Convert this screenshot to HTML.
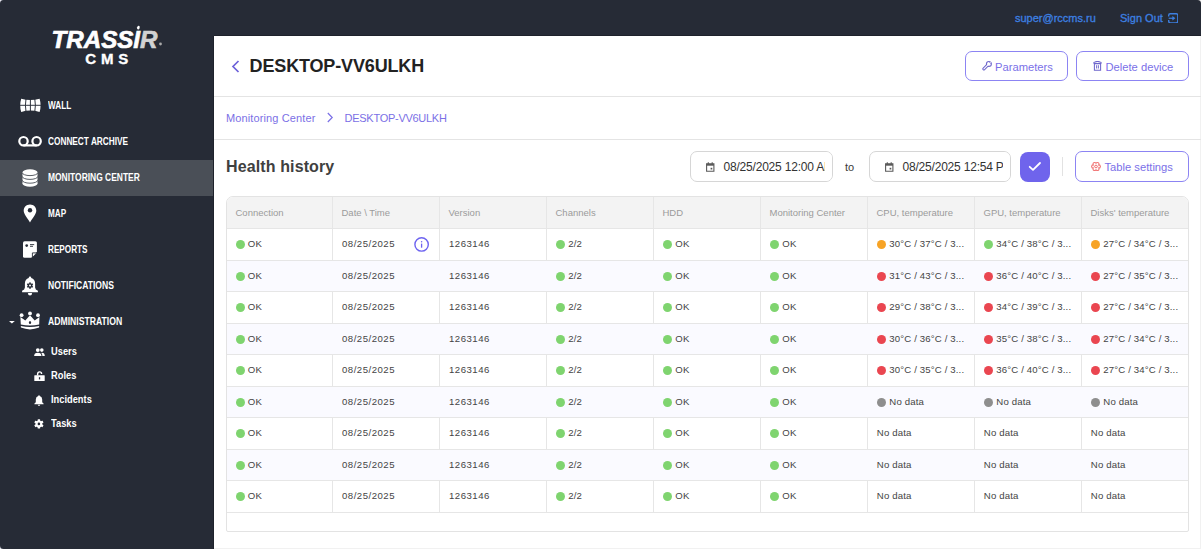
<!DOCTYPE html>
<html><head><meta charset="utf-8">
<style>
*{margin:0;padding:0;box-sizing:border-box}
html,body{width:1201px;height:549px;overflow:hidden;background:#262b36;font-family:"Liberation Sans",sans-serif;position:relative}
.abs{position:absolute}
/* sidebar */
.nav{position:absolute;left:48px;color:#fff;font-weight:bold;font-size:10px;line-height:12px;white-space:nowrap;transform:scaleX(0.84);transform-origin:0 0}
.sub{position:absolute;left:51px;color:#fff;font-weight:bold;font-size:10px;line-height:12px;white-space:nowrap;transform:scaleX(0.93);transform-origin:0 0}
.ico{position:absolute}
.hl{position:absolute;left:0;top:160px;width:214px;height:36px;background:#4a4f57}
/* top */
.toplink{position:absolute;top:11px;color:#3d80e2;font-size:11px;line-height:14px;white-space:nowrap;-webkit-text-stroke:0.3px #3d80e2}
/* panel */
.panel{position:absolute;left:214px;top:36px;width:987px;height:513px;background:#fff}
.sep{position:absolute;left:214px;width:987px;height:1px;background:#e4e4e4}
.title{position:absolute;left:249.6px;top:55px;font-size:18px;line-height:22px;font-weight:bold;color:#222;letter-spacing:-0.15px;white-space:nowrap}
.btn{position:absolute;border:1px solid #8c84f3;border-radius:7px;background:#fff;color:#7a70e8;font-size:11.2px;line-height:14px;white-space:nowrap}
.btn span{position:absolute;top:7.5px}
.bc{position:absolute;top:111px;font-size:11px;line-height:14px;color:#7b70e6;white-space:nowrap}
.hh{position:absolute;left:226px;top:156.6px;font-size:16px;line-height:20px;font-weight:bold;color:#404040;white-space:nowrap;letter-spacing:0.12px}
.inp{position:absolute;top:151px;height:31px;border:1px solid #d6d6d6;border-radius:7px;background:#fff;overflow:hidden}
.inp span{position:absolute;top:8px;font-size:12px;line-height:14px;color:#333;white-space:nowrap;letter-spacing:-0.2px}
/* table */
.tbl{position:absolute;left:226px;top:196px;width:963px;height:336px;border:1px solid #e3e3e3;border-radius:7px 7px 2px 2px;overflow:hidden;background:#fff}
.thead{position:absolute;left:214px;top:0;width:987px;height:228px}
.row{position:absolute;left:227px;width:961px;border-top:1px solid #e6e6e6}
.row.st{background:#fafaff}
.vl{position:absolute;top:197px;height:315px;width:1px;background:#e6e6e6}
.h{position:absolute;top:11px;font-size:9.5px;line-height:12px;color:#9b9b9b;white-space:nowrap}
.t{position:absolute;font-size:9.6px;line-height:12px;color:#444;white-space:nowrap;letter-spacing:0.15px}
.num{letter-spacing:0.5px}
.dot{position:absolute;width:9px;height:9px;border-radius:50%}
.dot.g{background:#7fd46f}
.dot.o{background:#f7a325}
.dot.r{background:#ea4650}
.dot.n{background:#8e8e8e}
</style></head><body>
<!-- sidebar -->
<svg class="ico" style="left:48px;top:22px" width="120" height="45" viewBox="0 0 120 45">
  <text x="3.5" y="26" fill="#fff" stroke="#fff" stroke-width="0.7" font-family="Liberation Sans" font-weight="bold" font-style="italic" font-size="24.5" textLength="106" lengthAdjust="spacingAndGlyphs">TRASSI<tspan fill="#d2d2d2" stroke="#d2d2d2">R</tspan></text>
  <ellipse cx="90.4" cy="5.6" rx="1.3" ry="1.9" fill="#fff" transform="rotate(15 90.4 5.6)"/>
  <circle cx="112.5" cy="22" r="1.4" fill="#aaa"/>
  <text x="37.3" y="41.6" fill="#fff" stroke="#fff" stroke-width="0.35" font-family="Liberation Sans" font-weight="bold" font-size="15" textLength="43" lengthAdjust="spacing">CMS</text>
</svg>

<div class="hl"></div>

<!-- wall -->
<svg class="ico" style="left:19px;top:97px" width="23" height="17" viewBox="0 0 23 17">
  <path d="M2.2 1.7 Q11.4 4.4 20.6 1.7 Q22.6 8.3 20.6 14.9 Q11.4 12.2 2.2 14.9 Q0.2 8.3 2.2 1.7Z" fill="#fff"/>
  <path d="M7.1 1 Q5.7 8.3 7.1 15.6 M11.4 1 V15.6 M15.7 1 Q17.1 8.3 15.7 15.6 M0 8.3 H23" stroke="#262b36" stroke-width="0.95" fill="none"/>
</svg>
<div class="nav" style="top:100px;transform:scaleX(0.817)">WALL</div>

<!-- connect archive -->
<svg class="ico" style="left:18px;top:134.5px" width="25" height="13" viewBox="0 0 25 13">
  <circle cx="5.5" cy="6.2" r="4.2" stroke="#fff" stroke-width="2.2" fill="none"/>
  <circle cx="18.6" cy="6.2" r="4.2" stroke="#fff" stroke-width="2.2" fill="none"/>
  <path d="M5.5 10.4 H18.6" stroke="#fff" stroke-width="2.2"/>
</svg>
<div class="nav" style="top:136px;transform:scaleX(0.827)">CONNECT ARCHIVE</div>

<!-- monitoring -->
<svg class="ico" style="left:21px;top:168px" width="18" height="20" viewBox="0 0 18 20">
  <ellipse cx="9" cy="4.2" rx="7.5" ry="2.9" fill="#fff"/>
  <ellipse cx="9" cy="15.8" rx="7.5" ry="2.9" fill="#fff"/>
  <rect x="1.5" y="4.2" width="15" height="11.6" fill="#fff"/>
  <path d="M1.2 4.6 A7.8 3 0 0 0 16.8 4.6 M1.2 8.4 A7.8 3 0 0 0 16.8 8.4 M1.2 12.2 A7.8 3 0 0 0 16.8 12.2" stroke="#4a4f57" stroke-width="0.9" fill="none"/>
</svg>
<div class="nav" style="top:172px;transform:scaleX(0.845)">MONITORING CENTER</div>

<!-- map -->
<svg class="ico" style="left:23px;top:204px" width="14" height="19" viewBox="0 0 14 19">
  <path d="M7 0.5 C10.8 0.5 13.3 3.3 13.3 6.6 C13.3 10.5 9.5 14 7 18.5 C4.5 14 0.7 10.5 0.7 6.6 C0.7 3.3 3.2 0.5 7 0.5Z" fill="#fff"/>
  <circle cx="7" cy="6.3" r="2.2" fill="#262b36"/>
</svg>
<div class="nav" style="top:208px;transform:scaleX(0.817)">MAP</div>

<!-- reports -->
<svg class="ico" style="left:22px;top:240px" width="16" height="19" viewBox="0 0 16 19">
  <path d="M2.6 1.2 H13.3 Q14.9 1.2 14.9 2.8 V11.8 L9.3 17.8 H2.6 Q1 17.8 1 16.2 V2.8 Q1 1.2 2.6 1.2Z" fill="#fff"/>
  <path d="M10.4 17.6 L10.4 12.9 L14.8 12.9Z" fill="#fff" stroke="#262b36" stroke-width="0.9" stroke-linejoin="round"/>
  <circle cx="4.7" cy="5.6" r="1.35" fill="#262b36"/>
  <path d="M8 4.6 H12.2 M8 6.3 H11" stroke="#262b36" stroke-width="0.9"/>
</svg>
<div class="nav" style="top:244px;transform:scaleX(0.817)">REPORTS</div>

<!-- notifications -->
<svg class="ico" style="left:21px;top:275.5px" width="18" height="21" viewBox="0 0 18 21">
  <path d="M9 0.6 Q10.2 0.6 10.3 1.9 Q14 2.9 14.1 7.6 V11.4 Q14.2 13.6 16.9 14.8 V16.3 H1.1 V14.8 Q3.8 13.6 3.9 11.4 V7.6 Q4 2.9 7.7 1.9 Q7.8 0.6 9 0.6Z" fill="#fff"/>
  <path d="M6.9 17 H11.1 Q11.1 19.6 9 19.6 Q6.9 19.6 6.9 17Z" fill="#fff"/>
  <g transform="translate(9 9.6)" fill="#262b36">
    <circle r="2.3"/>
    <rect x="-0.75" y="-3.2" width="1.5" height="6.4"/>
    <rect x="-0.75" y="-3.2" width="1.5" height="6.4" transform="rotate(60)"/>
    <rect x="-0.75" y="-3.2" width="1.5" height="6.4" transform="rotate(120)"/>
  </g>
  <circle cx="9" cy="9.6" r="1" fill="#fff"/>
</svg>
<div class="nav" style="top:280px;transform:scaleX(0.855)">NOTIFICATIONS</div>

<!-- administration -->
<svg class="ico" style="left:8px;top:311px" width="34" height="20" viewBox="0 0 34 20">
  <path d="M1 9.9 H6.8 L3.9 12.6Z" fill="#fff"/>
  <circle cx="13.6" cy="4.2" r="1.9" fill="#fff"/>
  <circle cx="22" cy="2.4" r="1.9" fill="#fff"/>
  <circle cx="30" cy="4.2" r="1.9" fill="#fff"/>
  <path d="M12.4 6 L17.3 9.6 L22 4.3 L26.7 9.6 L31.4 6 L31.2 13.6 Q22 15.6 12.8 13.6Z" fill="#fff"/>
  <path d="M12.8 14.9 Q22 16.9 31.2 14.9 L31.1 16.6 Q22 20.2 12.9 16.6Z" fill="#fff"/>
  <ellipse cx="22" cy="11.6" rx="1.1" ry="1.5" fill="#262b36"/>
</svg>
<div class="nav" style="top:316px;transform:scaleX(0.864)">ADMINISTRATION</div>

<!-- sub items -->
<svg class="ico" style="left:33.5px;top:347.6px" width="11" height="9" viewBox="0 0 11 9">
  <circle cx="3.8" cy="2.1" r="1.9" fill="#fff"/><circle cx="7.8" cy="2.1" r="1.8" fill="#fff"/>
  <path d="M0.1 8.1 Q0.1 4.7 3.8 4.7 Q7.5 4.7 7.5 8.1Z" fill="#fff"/>
  <path d="M7.9 4.7 Q10.8 4.7 10.8 8.1 H8.4 Q8.4 6 7.3 5Z" fill="#fff"/>
</svg>
<div class="sub" style="top:346px">Users</div>
<svg class="ico" style="left:34px;top:371px" width="11" height="11" viewBox="0 0 11 11">
  <path d="M3.6 4.6 V3.2 Q3.6 0.9 5.6 0.9 Q7.6 0.9 7.6 3" stroke="#fff" stroke-width="1.4" fill="none"/>
  <rect x="0.3" y="4.3" width="10.4" height="5.8" rx="0.5" fill="#fff"/>
  <rect x="4.9" y="6.2" width="1.3" height="2.2" fill="#262b36"/>
</svg>
<div class="sub" style="top:370px">Roles</div>
<svg class="ico" style="left:34px;top:395px" width="10" height="11" viewBox="0 0 10 11">
  <path d="M5 0.3 Q5.8 0.3 5.8 1 Q8.2 1.8 8.2 4.5 V6.8 Q8.2 7.8 9.6 8.6 V9.3 H0.4 V8.6 Q1.8 7.8 1.8 6.8 V4.5 Q1.8 1.8 4.2 1 Q4.2 0.3 5 0.3Z" fill="#fff"/>
  <path d="M3.8 9.8 H6.2 Q6.2 10.9 5 10.9 Q3.8 10.9 3.8 9.8Z" fill="#fff"/>
</svg>
<div class="sub" style="top:394px">Incidents</div>
<svg class="ico" style="left:34px;top:419px" width="10" height="10" viewBox="0 0 10 10">
  <g transform="translate(4.9 4.9)" fill="#fff">
    <circle r="3.4"/>
    <rect x="-1.2" y="-4.7" width="2.4" height="9.4" rx="0.4"/>
    <rect x="-1.2" y="-4.7" width="2.4" height="9.4" rx="0.4" transform="rotate(60)"/>
    <rect x="-1.2" y="-4.7" width="2.4" height="9.4" rx="0.4" transform="rotate(120)"/>
  </g>
  <circle cx="4.9" cy="4.9" r="1.3" fill="#262b36"/>
</svg>
<div class="sub" style="top:418px">Tasks</div>

<!-- top bar -->
<div class="toplink" style="left:1015px">super@rccms.ru</div>
<div class="toplink" style="left:1120px">Sign Out</div>
<svg class="ico" style="left:1167.5px;top:12.8px" width="10.5" height="10.5" viewBox="0 0 10.5 10.5">
  <path d="M0.7 3.4 V2.2 Q0.7 0.7 2.2 0.7 H8.3 Q9.8 0.7 9.8 2.2 V8.3 Q9.8 9.8 8.3 9.8 H2.2 Q0.7 9.8 0.7 8.3 V7.1" stroke="#3d80e2" stroke-width="1.35" fill="none"/>
  <path d="M0.7 5.25 H5" stroke="#3d80e2" stroke-width="1.2"/>
  <path d="M4.4 3.1 L7.4 5.25 L4.4 7.4Z" fill="#3d80e2"/>
</svg>

<!-- panel -->
<div class="panel"></div>
<div class="abs" style="left:214px;top:548px;width:987px;height:1px;background:#f1f1f1"></div>
<div class="abs" style="left:1200px;top:36px;width:1px;height:513px;background:#f1f1f1"></div>
<div class="abs" style="left:213px;top:36px;width:1px;height:513px;background:#1e222b"></div>
<div class="abs" style="left:214px;top:35px;width:987px;height:1px;background:#1e222b"></div>
<div class="sep" style="top:96px"></div>
<div class="sep" style="top:139px"></div>

<svg class="ico" style="left:230px;top:60px" width="12" height="13" viewBox="0 0 12 13">
  <path d="M8.5 1 L3 6.5 L8.5 12" stroke="#6c61d9" stroke-width="1.7" fill="none"/>
</svg>
<div class="title">DESKTOP-VV6ULKH</div>

<div class="btn" style="left:965px;top:51px;width:103px;height:30px">
  <svg class="ico" style="left:15.5px;top:8.2px" width="11" height="11" viewBox="0 0 11 11">
  <g stroke="#6e66cc" fill="none" stroke-width="3.1" stroke-linecap="round"><path d="M1.9 8.9 L5.6 5.2"/></g>
  <circle cx="6.9" cy="3.9" r="3" fill="#6e66cc"/>
  <g stroke="#fff" fill="none" stroke-width="1.1" stroke-linecap="round"><path d="M1.9 8.9 L5.6 5.2"/></g>
  <circle cx="6.9" cy="3.9" r="1.9" fill="#fff"/>
  <path d="M6.9 3.9 L8.6 0 L11 2.4Z" fill="#fff"/>
  <path d="M7.6 2.6 L8.2 1.2 M8.2 3.2 L9.8 2.8" stroke="#6e66cc" stroke-width="1" fill="none"/>
</svg>
  <span style="left:29px">Parameters</span>
</div>
<div class="btn" style="left:1076px;top:51px;width:113px;height:30px">
  <svg class="ico" style="left:16px;top:8.6px" width="9" height="10" viewBox="0 0 9 10">
  <path d="M0.6 2.4 Q0.6 1.2 2.2 1.1 Q3 0.4 4.5 0.4 Q6 0.4 6.8 1.1 Q8.4 1.2 8.4 2.4" stroke="#6e66cc" stroke-width="1.05" fill="none"/>
  <path d="M1.4 2.6 H7.6 V9.2 H1.4Z" stroke="#6e66cc" stroke-width="1.05" fill="none"/>
  <path d="M3.6 4.2 V7.5 M5.4 4.2 V7.5" stroke="#6e66cc" stroke-width="0.95"/>
</svg>
  <span style="left:28.5px">Delete device</span>
</div>

<div class="bc" style="left:226px;letter-spacing:0.12px">Monitoring Center</div>
<svg class="ico" style="left:326px;top:112px" width="8" height="11" viewBox="0 0 8 11">
  <path d="M1.8 1 L6.2 5.5 L1.8 10" stroke="#7b70e6" stroke-width="1.2" fill="none"/>
</svg>
<div class="bc" style="left:344.6px;letter-spacing:-0.28px">DESKTOP-VV6ULKH</div>

<div class="hh">Health history</div>

<div class="inp" style="left:690px;width:143px">
  <svg class="ico" style="left:15px;top:9.6px" width="9" height="10" viewBox="0 0 9 10">
    <path d="M0.6 1.9 H7.9 V9.3 H0.6Z" stroke="#5a5a5a" stroke-width="1.1" fill="#fff"/>
    <rect x="0.6" y="1.9" width="7.3" height="1.8" fill="#5a5a5a"/>
    <path d="M2.3 0.3 V2 M6.2 0.3 V2" stroke="#5a5a5a" stroke-width="1.1"/>
    <rect x="4.6" y="5.8" width="1.7" height="1.7" fill="#5a5a5a"/>
  </svg>
  <span style="left:32.5px">08/25/2025 12:00 AM</span>
  <div class="abs" style="left:134px;top:0;width:10px;height:30px;background:#fff"></div>
</div>
<div class="abs" style="left:845px;top:160px;font-size:11px;line-height:14px;color:#3a3a3a">to</div>
<div class="inp" style="left:869px;width:142px">
  <svg class="ico" style="left:15px;top:9.6px" width="9" height="10" viewBox="0 0 9 10">
    <path d="M0.6 1.9 H7.9 V9.3 H0.6Z" stroke="#5a5a5a" stroke-width="1.1" fill="#fff"/>
    <rect x="0.6" y="1.9" width="7.3" height="1.8" fill="#5a5a5a"/>
    <path d="M2.3 0.3 V2 M6.2 0.3 V2" stroke="#5a5a5a" stroke-width="1.1"/>
    <rect x="4.6" y="5.8" width="1.7" height="1.7" fill="#5a5a5a"/>
  </svg>
  <span style="left:32.5px">08/25/2025 12:54 PM</span>
  <div class="abs" style="left:133px;top:0;width:10px;height:30px;background:#fff"></div>
</div>
<div class="abs" style="left:1020px;top:151.5px;width:30px;height:30px;border-radius:8px;background:#6f64ec">
  <svg class="ico" style="left:8px;top:9.5px" width="14" height="11" viewBox="0 0 14 11">
    <path d="M1.7 5.8 L5 8.9 L12 2" stroke="#fff" stroke-width="1.8" fill="none" stroke-linecap="round" stroke-linejoin="round"/>
  </svg>
</div>
<div class="abs" style="left:1062px;top:157px;width:1px;height:19px;background:#e2e2e2"></div>
<div class="btn" style="left:1075px;top:151px;width:114px;height:31px">
  <svg class="ico" style="left:14px;top:9.0px" width="12" height="11" viewBox="0 0 12 11">
    <g fill="#f07272"><circle cx="8.75" cy="5.50" r="2.17"/><circle cx="7.38" cy="3.12" r="2.17"/><circle cx="4.63" cy="3.12" r="2.17"/><circle cx="3.25" cy="5.50" r="2.17"/><circle cx="4.62" cy="7.88" r="2.17"/><circle cx="7.38" cy="7.88" r="2.17"/></g>
    <g fill="#fff"><circle cx="8.75" cy="5.50" r="1.12"/><circle cx="7.38" cy="3.12" r="1.12"/><circle cx="4.63" cy="3.12" r="1.12"/><circle cx="3.25" cy="5.50" r="1.12"/><circle cx="4.62" cy="7.88" r="1.12"/><circle cx="7.38" cy="7.88" r="1.12"/><circle cx="6" cy="5.5" r="2.3"/></g>
    <ellipse cx="6" cy="5.5" rx="1.6" ry="1.0" stroke="#f07272" stroke-width="0.95" fill="none"/>
  </svg>
  <span style="left:28.5px">Table settings</span>
</div>

<!-- table -->
<svg class="ico" style="left:413px;top:236px;z-index:5" width="17" height="17" viewBox="0 0 17 17">
  <circle cx="8.6" cy="8.4" r="6.7" stroke="#6d63f0" stroke-width="1.4" fill="none"/>
  <path d="M8.6 7.6 V11.7" stroke="#6d63f0" stroke-width="1.3"/>
  <circle cx="8.6" cy="5.7" r="0.75" fill="#6d63f0"/>
</svg>
<div class="tbl">
  <div class="abs" style="left:0;top:0;width:963px;height:32px;background:#f3f3f3"></div>
</div>
<div class="abs" style="left:0;top:0;width:1201px;height:549px">
<div class="abs" style="left:227px;top:512px;width:961px;height:1px;background:#e6e6e6"></div><div class="vl" style="left:332.0px"></div><div class="vl" style="left:439.0px"></div><div class="vl" style="left:546.0px"></div><div class="vl" style="left:653.0px"></div><div class="vl" style="left:760.0px"></div><div class="vl" style="left:867.0px"></div><div class="vl" style="left:974.0px"></div><div class="vl" style="left:1081.0px"></div>
</div>
<div class="abs" style="left:0;top:0">
<span class="h" style="left:235.5px;top:206.7px">Connection</span>
<span class="h" style="left:341.5px;top:206.7px">Date \ Time</span>
<span class="h" style="left:448.5px;top:206.7px">Version</span>
<span class="h" style="left:555.5px;top:206.7px">Channels</span>
<span class="h" style="left:662.5px;top:206.7px">HDD</span>
<span class="h" style="left:769.5px;top:206.7px">Monitoring Center</span>
<span class="h" style="left:876.5px;top:206.7px">CPU, temperature</span>
<span class="h" style="left:983.5px;top:206.7px">GPU, temperature</span>
<span class="h" style="left:1090.5px;top:206.7px">Disks' temperature</span>
<div class="row" style="top:228px;height:32px"></div>
<div class="row st" style="top:260px;height:31px"></div>
<div class="row" style="top:291px;height:32px"></div>
<div class="row st" style="top:323px;height:31px"></div>
<div class="row" style="top:354px;height:32px"></div>
<div class="row st" style="top:386px;height:31px"></div>
<div class="row" style="top:417px;height:32px"></div>
<div class="row st" style="top:449px;height:31px"></div>
<div class="row" style="top:480px;height:32px"></div>
<i class="dot g" style="left:235.5px;top:240.0px"></i><span class="t" style="left:247.8px;top:238.1px">OK</span>
<span class="t num" style="left:342.0px;top:238.1px">08/25/2025</span>
<span class="t num" style="left:449.0px;top:238.1px">1263146</span>
<i class="dot g" style="left:556.0px;top:240.0px"></i><span class="t" style="left:568.3px;top:238.1px">2/2</span>
<i class="dot g" style="left:663.0px;top:240.0px"></i><span class="t" style="left:675.3px;top:238.1px">OK</span>
<i class="dot g" style="left:770.0px;top:240.0px"></i><span class="t" style="left:782.3px;top:238.1px">OK</span>
<i class="dot o" style="left:877.0px;top:240.0px"></i><span class="t" style="left:889.3px;top:238.1px">30°C / 37°C / 3...</span>
<i class="dot g" style="left:984.0px;top:240.0px"></i><span class="t" style="left:996.3px;top:238.1px">34°C / 38°C / 3...</span>
<i class="dot o" style="left:1091.0px;top:240.0px"></i><span class="t" style="left:1103.3px;top:238.1px">27°C / 34°C / 3...</span>
<i class="dot g" style="left:235.5px;top:272.0px"></i><span class="t" style="left:247.8px;top:270.1px">OK</span>
<span class="t num" style="left:342.0px;top:270.1px">08/25/2025</span>
<span class="t num" style="left:449.0px;top:270.1px">1263146</span>
<i class="dot g" style="left:556.0px;top:272.0px"></i><span class="t" style="left:568.3px;top:270.1px">2/2</span>
<i class="dot g" style="left:663.0px;top:272.0px"></i><span class="t" style="left:675.3px;top:270.1px">OK</span>
<i class="dot g" style="left:770.0px;top:272.0px"></i><span class="t" style="left:782.3px;top:270.1px">OK</span>
<i class="dot r" style="left:877.0px;top:272.0px"></i><span class="t" style="left:889.3px;top:270.1px">31°C / 43°C / 3...</span>
<i class="dot r" style="left:984.0px;top:272.0px"></i><span class="t" style="left:996.3px;top:270.1px">36°C / 40°C / 3...</span>
<i class="dot r" style="left:1091.0px;top:272.0px"></i><span class="t" style="left:1103.3px;top:270.1px">27°C / 35°C / 3...</span>
<i class="dot g" style="left:235.5px;top:303.0px"></i><span class="t" style="left:247.8px;top:301.1px">OK</span>
<span class="t num" style="left:342.0px;top:301.1px">08/25/2025</span>
<span class="t num" style="left:449.0px;top:301.1px">1263146</span>
<i class="dot g" style="left:556.0px;top:303.0px"></i><span class="t" style="left:568.3px;top:301.1px">2/2</span>
<i class="dot g" style="left:663.0px;top:303.0px"></i><span class="t" style="left:675.3px;top:301.1px">OK</span>
<i class="dot g" style="left:770.0px;top:303.0px"></i><span class="t" style="left:782.3px;top:301.1px">OK</span>
<i class="dot r" style="left:877.0px;top:303.0px"></i><span class="t" style="left:889.3px;top:301.1px">29°C / 38°C / 3...</span>
<i class="dot r" style="left:984.0px;top:303.0px"></i><span class="t" style="left:996.3px;top:301.1px">34°C / 39°C / 3...</span>
<i class="dot r" style="left:1091.0px;top:303.0px"></i><span class="t" style="left:1103.3px;top:301.1px">27°C / 34°C / 3...</span>
<i class="dot g" style="left:235.5px;top:335.0px"></i><span class="t" style="left:247.8px;top:333.1px">OK</span>
<span class="t num" style="left:342.0px;top:333.1px">08/25/2025</span>
<span class="t num" style="left:449.0px;top:333.1px">1263146</span>
<i class="dot g" style="left:556.0px;top:335.0px"></i><span class="t" style="left:568.3px;top:333.1px">2/2</span>
<i class="dot g" style="left:663.0px;top:335.0px"></i><span class="t" style="left:675.3px;top:333.1px">OK</span>
<i class="dot g" style="left:770.0px;top:335.0px"></i><span class="t" style="left:782.3px;top:333.1px">OK</span>
<i class="dot r" style="left:877.0px;top:335.0px"></i><span class="t" style="left:889.3px;top:333.1px">30°C / 36°C / 3...</span>
<i class="dot r" style="left:984.0px;top:335.0px"></i><span class="t" style="left:996.3px;top:333.1px">35°C / 38°C / 3...</span>
<i class="dot r" style="left:1091.0px;top:335.0px"></i><span class="t" style="left:1103.3px;top:333.1px">27°C / 34°C / 3...</span>
<i class="dot g" style="left:235.5px;top:366.0px"></i><span class="t" style="left:247.8px;top:364.1px">OK</span>
<span class="t num" style="left:342.0px;top:364.1px">08/25/2025</span>
<span class="t num" style="left:449.0px;top:364.1px">1263146</span>
<i class="dot g" style="left:556.0px;top:366.0px"></i><span class="t" style="left:568.3px;top:364.1px">2/2</span>
<i class="dot g" style="left:663.0px;top:366.0px"></i><span class="t" style="left:675.3px;top:364.1px">OK</span>
<i class="dot g" style="left:770.0px;top:366.0px"></i><span class="t" style="left:782.3px;top:364.1px">OK</span>
<i class="dot r" style="left:877.0px;top:366.0px"></i><span class="t" style="left:889.3px;top:364.1px">30°C / 35°C / 3...</span>
<i class="dot r" style="left:984.0px;top:366.0px"></i><span class="t" style="left:996.3px;top:364.1px">36°C / 40°C / 3...</span>
<i class="dot r" style="left:1091.0px;top:366.0px"></i><span class="t" style="left:1103.3px;top:364.1px">27°C / 34°C / 3...</span>
<i class="dot g" style="left:235.5px;top:398.0px"></i><span class="t" style="left:247.8px;top:396.1px">OK</span>
<span class="t num" style="left:342.0px;top:396.1px">08/25/2025</span>
<span class="t num" style="left:449.0px;top:396.1px">1263146</span>
<i class="dot g" style="left:556.0px;top:398.0px"></i><span class="t" style="left:568.3px;top:396.1px">2/2</span>
<i class="dot g" style="left:663.0px;top:398.0px"></i><span class="t" style="left:675.3px;top:396.1px">OK</span>
<i class="dot g" style="left:770.0px;top:398.0px"></i><span class="t" style="left:782.3px;top:396.1px">OK</span>
<i class="dot n" style="left:877.0px;top:398.0px"></i><span class="t" style="left:889.3px;top:396.1px">No data</span>
<i class="dot n" style="left:984.0px;top:398.0px"></i><span class="t" style="left:996.3px;top:396.1px">No data</span>
<i class="dot n" style="left:1091.0px;top:398.0px"></i><span class="t" style="left:1103.3px;top:396.1px">No data</span>
<i class="dot g" style="left:235.5px;top:429.0px"></i><span class="t" style="left:247.8px;top:427.1px">OK</span>
<span class="t num" style="left:342.0px;top:427.1px">08/25/2025</span>
<span class="t num" style="left:449.0px;top:427.1px">1263146</span>
<i class="dot g" style="left:556.0px;top:429.0px"></i><span class="t" style="left:568.3px;top:427.1px">2/2</span>
<i class="dot g" style="left:663.0px;top:429.0px"></i><span class="t" style="left:675.3px;top:427.1px">OK</span>
<i class="dot g" style="left:770.0px;top:429.0px"></i><span class="t" style="left:782.3px;top:427.1px">OK</span>
<span class="t" style="left:876.8px;top:427.1px">No data</span>
<span class="t" style="left:983.8px;top:427.1px">No data</span>
<span class="t" style="left:1090.8px;top:427.1px">No data</span>
<i class="dot g" style="left:235.5px;top:461.0px"></i><span class="t" style="left:247.8px;top:459.1px">OK</span>
<span class="t num" style="left:342.0px;top:459.1px">08/25/2025</span>
<span class="t num" style="left:449.0px;top:459.1px">1263146</span>
<i class="dot g" style="left:556.0px;top:461.0px"></i><span class="t" style="left:568.3px;top:459.1px">2/2</span>
<i class="dot g" style="left:663.0px;top:461.0px"></i><span class="t" style="left:675.3px;top:459.1px">OK</span>
<i class="dot g" style="left:770.0px;top:461.0px"></i><span class="t" style="left:782.3px;top:459.1px">OK</span>
<span class="t" style="left:876.8px;top:459.1px">No data</span>
<span class="t" style="left:983.8px;top:459.1px">No data</span>
<span class="t" style="left:1090.8px;top:459.1px">No data</span>
<i class="dot g" style="left:235.5px;top:492.0px"></i><span class="t" style="left:247.8px;top:490.1px">OK</span>
<span class="t num" style="left:342.0px;top:490.1px">08/25/2025</span>
<span class="t num" style="left:449.0px;top:490.1px">1263146</span>
<i class="dot g" style="left:556.0px;top:492.0px"></i><span class="t" style="left:568.3px;top:490.1px">2/2</span>
<i class="dot g" style="left:663.0px;top:492.0px"></i><span class="t" style="left:675.3px;top:490.1px">OK</span>
<i class="dot g" style="left:770.0px;top:492.0px"></i><span class="t" style="left:782.3px;top:490.1px">OK</span>
<span class="t" style="left:876.8px;top:490.1px">No data</span>
<span class="t" style="left:983.8px;top:490.1px">No data</span>
<span class="t" style="left:1090.8px;top:490.1px">No data</span>
</div>
<svg class="ico" style="left:0;top:0" width="4" height="4" viewBox="0 0 4 4"><path d="M0 0 H3.5 Q0 0 0 3.5Z" fill="#e8e8f0"/></svg>
<svg class="ico" style="left:1197px;top:0" width="4" height="4" viewBox="0 0 4 4"><path d="M4 0 H0.5 Q4 0 4 3.5Z" fill="#f0eeee"/></svg>
<svg class="ico" style="left:0;top:545px" width="4" height="4" viewBox="0 0 4 4"><path d="M0 4 H3.5 Q0 4 0 0.5Z" fill="#e8e8f0"/></svg>
</body></html>
